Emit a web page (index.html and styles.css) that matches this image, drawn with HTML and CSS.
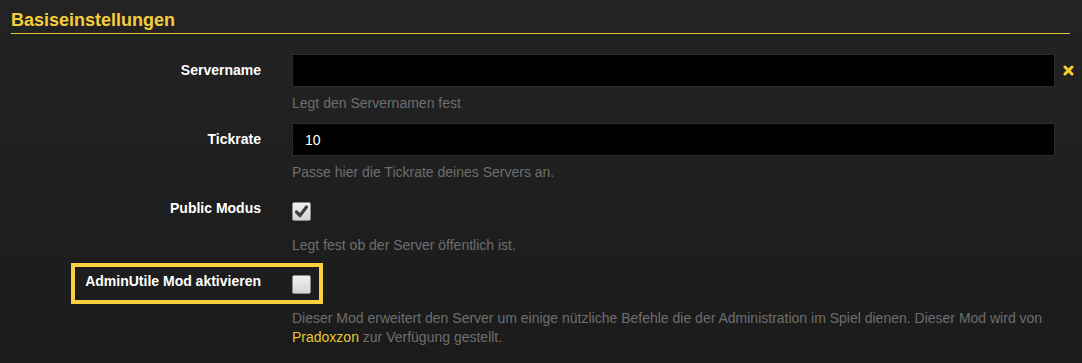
FILE: index.html
```html
<!DOCTYPE html>
<html lang="de">
<head>
<meta charset="utf-8">
<title>Basiseinstellungen</title>
<link rel="stylesheet" href="styles.css">
</head>
<body>
<div class="page">
  <h2 class="section-title">Basiseinstellungen</h2>
  <div class="form">
    <div class="group">
      <label class="label">Servername</label>
      <div class="field">
        <input class="text-input" type="text" value="">
        <span class="clear-icon">
          <svg width="11" height="11" viewBox="0 0 11 11"><path d="M2 2 L9 9 M9 2 L2 9" stroke="#f7cf2e" stroke-width="3" stroke-linecap="round"/></svg>
        </span>
      </div>
      <div class="help">Legt den Servernamen fest</div>
    </div>
    <div class="group">
      <label class="label">Tickrate</label>
      <div class="field">
        <input class="text-input" type="text" value="10">
      </div>
      <div class="help">Passe hier die Tickrate deines Servers an.</div>
    </div>
    <div class="group">
      <label class="label">Public Modus</label>
      <div class="field">
        <span class="checkbox">
          <svg width="17" height="17" viewBox="0 0 17 17"><path d="M3.5 9 L7 12.5 L13.5 4" fill="none" stroke="#3e3e3e" stroke-width="3.2" stroke-linecap="round" stroke-linejoin="round"/></svg>
        </span>
      </div>
      <div class="help">Legt fest ob der Server öffentlich ist.</div>
    </div>
    <div class="group highlighted">
      <label class="label">AdminUtile Mod aktivieren</label>
      <div class="field">
        <span class="checkbox"></span>
      </div>
      <div class="help">Dieser Mod erweitert den Server um einige nützliche Befehle die der Administration im Spiel dienen. Dieser Mod wird von <a class="link" href="#">Pradoxzon</a> zur Verfügung gestellt.</div>
    </div>
  </div>
</div>
</body>
</html>
```

FILE: styles.css
```css
html, body {
  margin: 0;
  padding: 0;
}
body {
  width: 1082px;
  height: 363px;
  overflow: hidden;
  background: linear-gradient(to bottom, #232323 0%, #1f1f1f 50%, #1b1b1b 100%);
  font-family: "Liberation Sans", Arial, sans-serif;
  color: #fff;
}
.page {
  padding: 0 12px 0 11px;
}
.section-title {
  margin: 0;
  padding: 8px 0 1px 0;
  font-size: 18px;
  line-height: 24px;
  font-weight: bold;
  color: #f6cd3a;
  border-bottom: 1px solid #eac53a;
}
.form {
  margin-top: 20px;
}
.group {
  position: relative;
  display: grid;
  grid-template-columns: 250px 1fr;
  column-gap: 31px;
  margin-bottom: 10px;
}
.label {
  grid-column: 1;
  text-align: right;
  font-size: 14px;
  font-weight: bold;
  line-height: 33px;
  color: #ffffff;
}
.field {
  grid-column: 2;
  display: flex;
  align-items: center;
}
.text-input {
  box-sizing: border-box;
  width: 763px;
  height: 33px;
  margin: 0;
  padding: 0 12px;
  background: #000;
  border: 1px solid #2c2c2c;
  color: #fff;
  font-family: "Liberation Sans", Arial, sans-serif;
  font-size: 14px;
  outline: none;
}
.clear-icon {
  display: flex;
  margin-left: 8px;
}
.checkbox {
  box-sizing: border-box;
  display: flex;
  align-items: center;
  justify-content: center;
  width: 19px;
  height: 19px;
  margin: 10px 0 8px 0;
  border: 1px solid #8c8c8c;
  border-radius: 2px;
  background: linear-gradient(to bottom, #f0f0f0, #d4d4d4);
}
.help {
  grid-column: 2;
  max-width: 763px;
  margin-top: 7px;
  font-size: 14px;
  line-height: 19px;
  color: #6e6e6e;
}
.link {
  color: #e9c52c;
  text-decoration: none;
}
.highlighted::before {
  content: "";
  position: absolute;
  left: 60px;
  top: -2px;
  width: 252px;
  height: 41px;
  box-sizing: border-box;
  border: 4px solid #fbcf3e;
  pointer-events: none;
}
```
